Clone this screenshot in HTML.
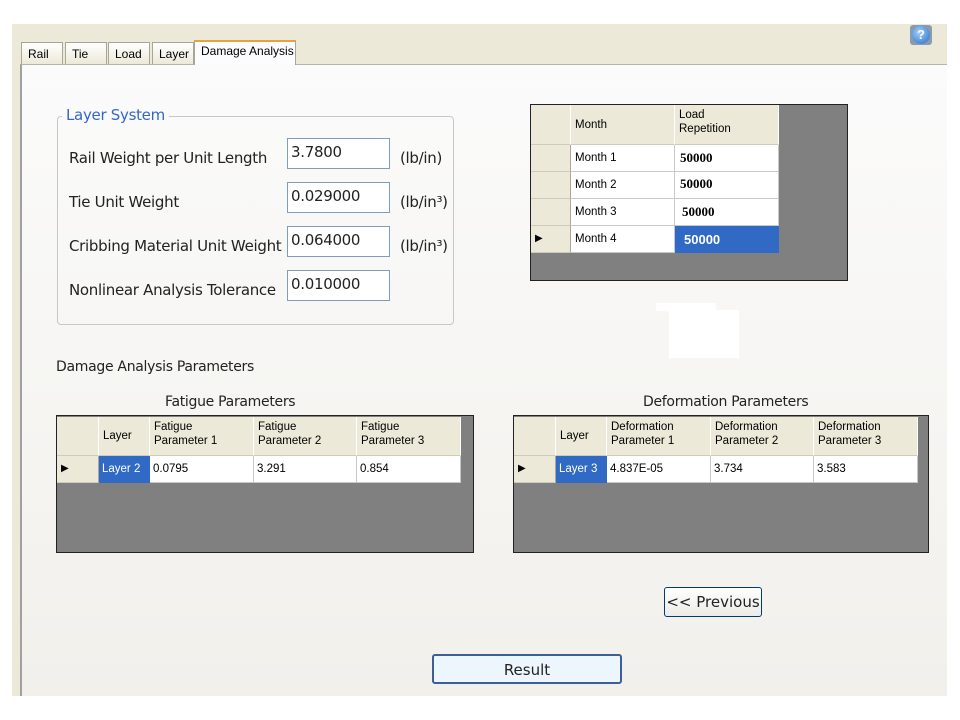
<!DOCTYPE html>
<html><head><style>
*{margin:0;padding:0;box-sizing:border-box}
body{width:960px;height:720px;background:#fff;position:relative;overflow:hidden;font-family:"Liberation Sans",sans-serif}
.a{position:absolute}
.panel{left:12px;top:24px;width:935px;height:672px;background:#ece9d8}
.content{left:20px;top:64px;width:927px;height:632px;background:linear-gradient(#fbfbfb,#f2f0eb);border-left:2px solid #a0a0a0;border-top:1px solid #b8b5a6}
.tab{top:42px;height:22px;background:linear-gradient(#fff,#ece9d8);border:1px solid #a8a697;border-bottom:none;font-size:12px;padding:4px 0 0 6px;color:#000}
.lbl{font-size:15px;color:#222;font-family:"DejaVu Sans","Liberation Sans",sans-serif;letter-spacing:-0.3px}
.inp{left:287px;width:103px;height:31px;background:#fff;border:1px solid #7f9db9;font-size:15px;padding:4px 0 0 3px;font-family:"DejaVu Sans",sans-serif;letter-spacing:-0.3px;color:#222}
.grid{background:#808080;border:1px solid #222}
.c{position:absolute;font-size:11.5px;color:#000;padding-left:4px;overflow:hidden;white-space:nowrap}
.h{background:#ece9d8;border-right:1px solid #fff;border-bottom:1px solid #cfcbb8;line-height:14px;padding-top:3px}
.d{background:#fff;border-right:1px solid #c8c8c8;border-bottom:1px solid #c8c8c8}
.rh{background:#ece9d8;border-bottom:1px solid #cfcbb8;border-right:1px solid #aca899}
.sel{background:#316ac5;color:#fff}
.btn{background:linear-gradient(#fff,#ecebe6);border:1px solid #003c74;border-radius:3px;text-align:center;font-size:15px;font-family:"DejaVu Sans",sans-serif;color:#222}
</style></head><body>
<div class="a panel"></div>
<div class="a content"></div>
<div class="a tab" style="left:21px;width:42px">Rail</div>
<div class="a tab" style="left:65px;width:42px">Tie</div>
<div class="a tab" style="left:108px;width:42px">Load</div>
<div class="a tab" style="left:152px;width:42px">Layer</div>
<div class="a tab" style="left:194px;top:40px;height:25px;width:102px;background:#fcfcfe;border-top:2px solid #e6a339;padding:2px 0 0 6px;font-size:12px">Damage Analysis</div>
<div class="a" style="left:910px;top:25px;width:22px;height:20px;background:#8a9bb0;border-radius:3px"><div style="margin:1px auto;width:18px;height:18px;border-radius:50%;background:radial-gradient(circle at 40% 35%,#9fd0ff,#2a6cc0);color:#fff;font-weight:bold;font-size:13px;text-align:center;line-height:18px">?</div></div>

<div class="a" style="left:57px;top:116px;width:397px;height:209px;border:1px solid #c8c8c0;border-radius:4px"></div>
<div class="a" style="left:62px;top:106px;padding:0 4px;background:#fafafa;color:#3366cc;font-size:15px;font-family:'DejaVu Sans',sans-serif;letter-spacing:-0.3px">Layer System</div>
<div class="a lbl" style="left:69px;top:149px">Rail Weight per Unit Length</div>
<div class="a lbl" style="left:69px;top:193px">Tie Unit Weight</div>
<div class="a lbl" style="left:69px;top:237px">Cribbing Material Unit Weight</div>
<div class="a lbl" style="left:69px;top:281px">Nonlinear Analysis Tolerance</div>
<div class="a inp" style="top:138px">3.7800</div>
<div class="a inp" style="top:182px">0.029000</div>
<div class="a inp" style="top:226px">0.064000</div>
<div class="a inp" style="top:270px">0.010000</div>
<div class="a lbl" style="left:400px;top:149px">(lb/in)</div>
<div class="a lbl" style="left:400px;top:193px">(lb/in³)</div>
<div class="a lbl" style="left:400px;top:237px">(lb/in³)</div>

<!-- month grid -->
<div class="a grid" style="left:530px;top:104px;width:318px;height:177px"></div>
<div class="c h" style="left:531px;top:105px;width:40px;height:40px"></div>
<div class="c h" style="left:571px;top:105px;width:104px;height:40px;padding-top:13px">Month</div>
<div class="c h" style="left:675px;top:105px;width:104px;height:40px">Load<br>Repetition</div>
<div class="c rh" style="left:531px;top:145px;width:40px;height:27px"></div>
<div class="c rh" style="left:531px;top:172px;width:40px;height:27px"></div>
<div class="c rh" style="left:531px;top:199px;width:40px;height:27px"></div>
<div class="c rh" style="left:531px;top:226px;width:40px;height:27px;padding:7px 0 0 4px;font-size:10px">&#9654;</div>
<div class="c d" style="left:571px;top:145px;width:104px;height:27px;padding-top:7px">Month 1</div>
<div class="c d" style="left:571px;top:172px;width:104px;height:27px;padding-top:7px">Month 2</div>
<div class="c d" style="left:571px;top:199px;width:104px;height:27px;padding-top:7px">Month 3</div>
<div class="c d" style="left:571px;top:226px;width:104px;height:27px;padding-top:7px">Month 4</div>
<div class="c d" style="left:675px;top:145px;width:104px;height:27px;padding:5px 0 0 5px;font-family:'Liberation Serif',serif;font-weight:bold;font-size:13px">50000</div>
<div class="c d" style="left:675px;top:172px;width:104px;height:27px;padding:4px 0 0 5px;font-family:'Liberation Serif',serif;font-weight:bold;font-size:13px">50000</div>
<div class="c d" style="left:675px;top:199px;width:104px;height:27px;padding:5px 0 0 7px;font-family:'Liberation Serif',serif;font-weight:bold;font-size:13px">50000</div>
<div class="c sel" style="left:675px;top:226px;width:104px;height:27px;padding:6px 0 0 9px;font-weight:bold;font-size:13px">50000</div>

<div class="a" style="left:656px;top:303px;width:60px;height:8px;background:#fff"></div>
<div class="a" style="left:669px;top:310px;width:70px;height:48px;background:#fff"></div>

<div class="a lbl" style="left:56px;top:359px;font-size:14px">Damage Analysis Parameters</div>
<div class="a lbl" style="left:165px;top:394px;font-size:14px">Fatigue Parameters</div>
<div class="a lbl" style="left:643px;top:394px;font-size:14px">Deformation Parameters</div>

<!-- fatigue -->
<div class="a grid" style="left:56px;top:415px;width:418px;height:138px"></div>
<div class="c h" style="left:57px;top:417px;width:42px;height:39px"></div>
<div class="c h" style="left:99px;top:417px;width:51px;height:39px;padding-top:12px">Layer</div>
<div class="c h" style="left:150px;top:417px;width:104px;height:39px">Fatigue<br>Parameter 1</div>
<div class="c h" style="left:254px;top:417px;width:103px;height:39px">Fatigue<br>Parameter 2</div>
<div class="c h" style="left:357px;top:417px;width:104px;height:39px">Fatigue<br>Parameter 3</div>
<div class="c rh" style="left:57px;top:456px;width:42px;height:27px;padding:7px 0 0 4px;font-size:10px">&#9654;</div>
<div class="c sel" style="left:99px;top:456px;width:51px;height:27px;padding:7px 0 0 3px">Layer 2</div>
<div class="c d" style="left:150px;top:456px;width:104px;height:27px;padding:7px 0 0 3px">0.0795</div>
<div class="c d" style="left:254px;top:456px;width:103px;height:27px;padding:7px 0 0 3px">3.291</div>
<div class="c d" style="left:357px;top:456px;width:104px;height:27px;padding:7px 0 0 3px">0.854</div>

<!-- deformation -->
<div class="a grid" style="left:513px;top:415px;width:416px;height:138px"></div>
<div class="c h" style="left:514px;top:417px;width:42px;height:39px"></div>
<div class="c h" style="left:556px;top:417px;width:51px;height:39px;padding-top:12px">Layer</div>
<div class="c h" style="left:607px;top:417px;width:104px;height:39px">Deformation<br>Parameter 1</div>
<div class="c h" style="left:711px;top:417px;width:103px;height:39px">Deformation<br>Parameter 2</div>
<div class="c h" style="left:814px;top:417px;width:104px;height:39px">Deformation<br>Parameter 3</div>
<div class="c rh" style="left:514px;top:456px;width:42px;height:27px;padding:7px 0 0 4px;font-size:10px">&#9654;</div>
<div class="c sel" style="left:556px;top:456px;width:51px;height:27px;padding:7px 0 0 3px">Layer 3</div>
<div class="c d" style="left:607px;top:456px;width:104px;height:27px;padding:7px 0 0 3px">4.837E-05</div>
<div class="c d" style="left:711px;top:456px;width:103px;height:27px;padding:7px 0 0 3px">3.734</div>
<div class="c d" style="left:814px;top:456px;width:104px;height:27px;padding:7px 0 0 3px">3.583</div>

<div class="a btn" style="left:664px;top:587px;width:98px;height:30px;padding-top:5px">&lt;&lt; Previous</div>
<div class="a btn" style="left:432px;top:654px;width:190px;height:30px;padding-top:5px;border:2px solid #3c5f9a;background:#eef6fd">Result</div>
</body></html>
